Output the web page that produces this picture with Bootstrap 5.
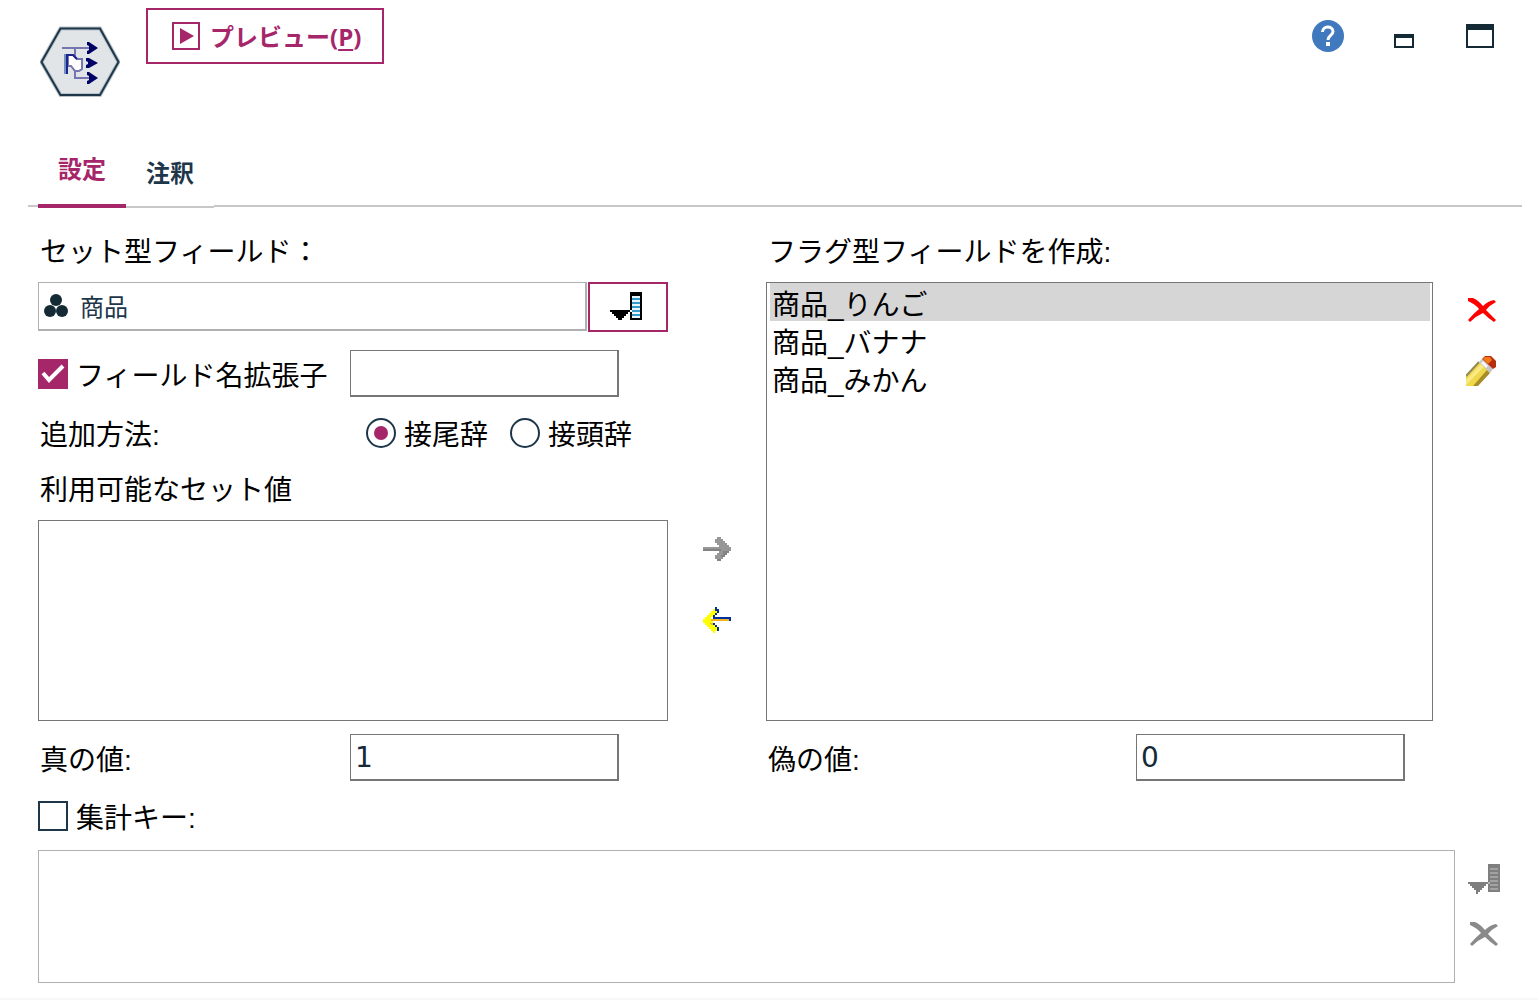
<!DOCTYPE html>
<html lang="ja">
<head>
<meta charset="utf-8">
<meta name="viewport" content="width=device-width, initial-scale=1">
<title>フラグ設定</title>
<link href="https://cdn.jsdelivr.net/npm/bootstrap@5.3.0/dist/css/bootstrap.min.css" rel="stylesheet">
<style>
  :root { --accent: #a6266a; --ink: #1d3649; --line: #767676; --line-soft: #b0b0b0; }
  body { font-family: "Liberation Sans", "Noto Sans CJK JP", sans-serif; font-size: 28px; line-height: 38px; color: #000; background: #fff; }
  svg { display: block; }
  label { padding-top: 6px; }
  .icon-btn { border: 0; background: none; padding: 0; }
  .top-bar { padding: 8px 44px 0 40px; height: 150px; }
  .node-icon { margin-top: 17px; }
  .btn-preview { font-family: "Open Sans", "Noto Sans CJK JP", sans-serif; font-size: 24px; line-height: 36px; font-weight: 700; color: var(--accent); background: #fff; border: 2px solid var(--accent); border-radius: 0; height: 56px; padding: 2px 21px 0 24px; gap: 10px; margin-left: 26px; }
  .btn-preview svg { margin-bottom: 2px; }
  .btn-preview u { text-underline-offset: 3px; text-decoration-thickness: 2px; }
  .window-tools { gap: 50px; height: 56px; }
  .tool-min { margin-top: 10px; margin-right: 2px; }
  .tab-strip { margin: 0 16px 0 28px; padding-left: 10px; border-bottom: 2px solid #c8c8c8; height: 57px; }
  .tab-strip .tab-btn { width: 88px; height: 58px; padding: 0; border: 0; border-bottom: 2px solid #c8c8c8; background: #fff; font-family: "Noto Sans CJK JP", sans-serif; font-size: 24px; font-weight: 700; line-height: 44px; padding-bottom: 12px; color: var(--ink); }
  .tab-strip .tab-btn.active { border-bottom: 4px solid var(--accent); color: var(--accent); line-height: 36px; padding-bottom: 18px; }
  .settings { padding: 25px 38px 15px; border-bottom: 2px solid #f8f8f8; }
  .pane-grid { display: grid; grid-template-columns: 630fr 98px 667fr 67px; }
  .caption { padding: 2px 0 0 2px; margin-bottom: 10px; display: block; }
  .indent { padding-left: 2px; }
  .field-box { border: 1px solid var(--line-soft); border-right-width: 2px; border-bottom-width: 2px; height: 49px; padding-left: 4px; gap: 11px; margin-right: 1px; }
  .field-box input { border: 0; outline: 0; padding: 0; min-width: 0; font-family: "Noto Sans CJK JP", sans-serif; font-size: 24px; line-height: 36px; color: var(--ink); background: none; }
  .btn-pick { width: 80px; height: 50px; border: 2px solid var(--accent); border-radius: 0; background: #fff; padding: 0 0 0 20px; }
  .value-box { width: 269px; height: 47px; border: 1px solid var(--line); border-right-width: 2px; border-bottom-width: 2px; border-radius: 0; padding: 0 4px; font-family: "DejaVu Sans", "Noto Sans CJK JP", sans-serif; font-size: 28px; line-height: 38px; color: #142a38; background: #fff; }
  .lead-cell { width: 312px; }
  .lead-cell-wide { width: 370px; }
  .lead-radio { width: 328px; }
  .row-ext { margin-top: 18px; }
  .row-how { margin-top: 14px; margin-bottom: 15px; }
  .row-vals { margin-top: 13px; }
  .row-keys { margin: 13px 0 12px; }
  .how-gap { gap: 22px; }
  .form-check-input.tick, .form-check-input.dot { width: 30px; height: 30px; margin: 0; float: none; border: 2px solid var(--ink); background-color: #fff; flex: none; }
  .form-check-input.tick { border-radius: 0; }
  .form-check-input.tick:checked { background-color: var(--accent); border-color: var(--accent); background-size: 26px 26px; background-image: url("data:image/svg+xml,%3csvg xmlns='http://www.w3.org/2000/svg' viewBox='0 0 26 26'%3e%3cpath fill='none' stroke='%23fff' stroke-width='4' d='M3 12l6 7L23 5'/%3e%3c/svg%3e"); }
  .form-check-input.dot:checked { background-color: #fff; border-color: var(--ink); background-size: 26px 26px; background-image: url("data:image/svg+xml,%3csvg xmlns='http://www.w3.org/2000/svg' viewBox='0 0 26 26'%3e%3ccircle cx='13' cy='13' r='7' fill='%23a6266a'/%3e%3c/svg%3e"); }
  .gap-tick { gap: 8px; }
  .list-area { display: block; width: 100%; border: 1px solid var(--line); border-radius: 0; background: #fff; padding: 0 2px 0 3px; outline: 0; font-family: "Liberation Sans", "Noto Sans CJK JP", sans-serif; font-size: 28px; color: #000; overflow: auto; }
  .list-area option { padding: 0 2px; height: 38px; min-height: 38px; line-height: 36px; color: #000; }
  .list-area option:checked { color: #000; background: #d6d6d6 linear-gradient(#d6d6d6, #d6d6d6); }
  .list-values { height: 201px; }
  .list-keys { height: 133px; border-color: var(--line-soft); }
  .move-tools { padding-top: 303px; gap: 42px; }
  .side-tools { padding: 66px 4px 0 0; gap: 34px; }
  .key-tools { width: 45px; padding: 14px 0 0; gap: 28px; }
</style>
</head>
<body>
<header class="top-bar d-flex align-items-start">
  <svg class="node-icon" width="80" height="74" viewBox="0 0 80 74" aria-hidden="true">
    <path d="M20.500 3.500H60L78.500 37 60 70H20.500L1.500 37Z" fill="#e1e5e8" stroke="#b9c2c8" stroke-width="4"/>
    <path d="M20.500 3.500H60L78.500 37 60 70H20.500L1.500 37Z" fill="none" stroke="#1d3649" stroke-width="2"/>
    <path d="M22 23H50M35 23V31M35 45V53H50" fill="none" stroke="#7676b0" stroke-width="2"/>
    <path d="M28 30H33L37 34H42V44L39 46H35L31 41H28Z" fill="#fff" stroke="#7676b0" stroke-width="2"/>
    <path d="M27 49V30H33L37 34" fill="none" stroke="#22228c" stroke-width="2"/>
    <path d="M25 29V49" stroke="#6d94c0" stroke-width="2"/>
    <path d="M47 17h2l9 6-9 6h-2v-3l2-1v-4l-2-1zM46 33h3l9 5-9 5h-3v-3l2-1v-2l-2-1zM47 47h2l9 6-9 6h-2v-3l2-1v-4l-2-1z" fill="#000066"/>
  </svg>
  <button type="button" class="btn-preview d-flex align-items-center">
    <svg width="28" height="28" viewBox="0 0 28 28" aria-hidden="true"><path d="M1 1H27V27H1Z" fill="none" stroke="#a6266a" stroke-width="2"/><path d="M8 6L22 14 8 22Z" fill="#a6266a"/></svg>
    <span>プレビュー(<u>P</u>)</span>
  </button>
  <div class="window-tools d-flex align-items-center ms-auto">
    <button type="button" class="icon-btn" aria-label="ヘルプ">
      <svg width="32" height="32" viewBox="0 0 32 32"><circle cx="16" cy="16" r="16" fill="#4179bf"/><path d="M10.500 12C10.500 5.500 21 5.500 21 11.500C21 15.500 16 15.500 16 20" fill="none" stroke="#fff" stroke-width="3"/><path d="M14 22h4v4h-4z" fill="#fff"/></svg>
    </button>
    <button type="button" class="icon-btn tool-min" aria-label="最小化">
      <svg width="20" height="14" viewBox="0 0 20 14"><path d="M0 0H20V14H0ZM2 4V12H18V4Z" fill="#142a35" fill-rule="evenodd"/></svg>
    </button>
    <button type="button" class="icon-btn" aria-label="最大化">
      <svg width="28" height="24" viewBox="0 0 28 24"><path d="M0 0H28V24H0ZM2 6V22H26V6Z" fill="#142a35" fill-rule="evenodd"/></svg>
    </button>
  </div>
</header>

<nav class="tab-strip d-flex" role="tablist">
  <button type="button" class="tab-btn active" role="tab" aria-selected="true">設定</button>
  <button type="button" class="tab-btn" role="tab" aria-selected="false">注釈</button>
</nav>

<main class="settings">
  <div class="pane-grid">
    <section>
      <label class="caption" for="setField">セット型フィールド：</label>
      <div class="d-flex">
        <div class="field-box d-flex align-items-center flex-grow-1">
          <svg width="26" height="26" viewBox="0 0 26 26" aria-hidden="true"><g fill="#142a35"><circle cx="13" cy="7" r="6"/><circle cx="7" cy="18" r="6"/><circle cx="19" cy="18" r="6"/></g></svg>
          <input id="setField" class="flex-grow-1" type="text" value="商品">
        </div>
        <button type="button" class="btn-pick" aria-label="フィールドを選択">
          <svg width="32" height="30" viewBox="0 0 32 30" shape-rendering="crispEdges"><path d="M0 18H20V20H18V22H16V24H14V26H12V28H8V26H6V24H4V22H2V20H0ZM20 0H32V28H20Z" fill="#000"/><path d="M22 4H30V26H22Z" fill="#e8f5fb"/><path d="M22 7H30M22 11H30M22 15H30M22 19H30M22 23H30" stroke="#3399cc" stroke-width="2"/><path d="M20 18H22V20H20Z" fill="#fff"/></svg>
        </button>
      </div>
      <div class="row-ext d-flex align-items-center">
        <div class="lead-cell d-flex align-items-center gap-tick">
          <input id="useExt" class="form-check-input tick" type="checkbox" checked>
          <label for="useExt">フィールド名拡張子</label>
        </div>
        <input class="value-box" type="text" aria-label="フィールド名拡張子">
      </div>
      <div class="row-how d-flex align-items-center" role="radiogroup" aria-labelledby="addHow">
        <label id="addHow" class="lead-radio indent" for="suffix">追加方法:</label>
        <div class="d-flex how-gap">
          <div class="d-flex align-items-center gap-tick">
            <input id="suffix" name="how" class="form-check-input dot" type="radio" aria-label="接尾辞" checked>
            <label for="suffix">接尾辞</label>
          </div>
          <div class="d-flex align-items-center gap-tick">
            <input id="prefix" name="how" class="form-check-input dot" type="radio">
            <label for="prefix">接頭辞</label>
          </div>
        </div>
      </div>
      <label class="caption" for="values">利用可能なセット値</label>
      <select id="values" class="list-area list-values" multiple></select>
    </section>

    <div class="move-tools d-flex flex-column align-items-center">
      <button type="button" class="icon-btn" aria-label="追加">
        <svg width="28" height="28" viewBox="0 0 28 28" shape-rendering="crispEdges"><path d="M0 12H16V10H14V8H12V4H14V2H18V4H20V6H22V8H24V10H26V12H28V16H26V18H24V20H22V22H20V24H18V26H14V24H12V20H14V18H16V16H0Z" fill="#979797"/><path d="M0 14H18V16H0ZM20 16H26V18H24V20H22V22H18V20H20ZM14 24H18V26H14Z" fill="#838383"/></svg>
      </button>
      <button type="button" class="icon-btn" aria-label="戻す">
        <svg width="28" height="28" viewBox="0 0 28 28" shape-rendering="crispEdges"><path d="M12 2H14V4H16V8H14V10H12V12H28V16H26V14H10V10H12ZM10 18H12V20H14V22H16V26H14V24H12V22H10Z" fill="#00309c"/><path d="M10 4H12V6H14V8H12V10H10V12H8V14H26V16H10V20H12V22H14V26H12V28H10V26H8V24H6V22H4V20H2V18H0V14H2V12H4V10H6V8H8V6H10Z" fill="#ffff00"/><path d="M8 14H26V16H8ZM6 18H10V20H8Z" fill="#f0b41e"/></svg>
      </button>
    </div>

    <section class="d-flex flex-column">
      <label class="caption" for="flags">フラグ型フィールドを作成:</label>
      <select id="flags" class="list-area flex-grow-1" multiple>
        <option selected>商品_りんご</option>
        <option>商品_バナナ</option>
        <option>商品_みかん</option>
      </select>
    </section>

    <div class="side-tools d-flex flex-column align-items-end">
      <button type="button" class="icon-btn" aria-label="削除">
        <svg width="28" height="24" viewBox="0 0 28 24"><path d="M0 0H5Q10 2 15 8Q20 3 26 2L28 4Q22 7 18 12Q22 16 28 22L26 24Q20 20 15 15Q8 18 2 24L0 22Q5 16 11 11Q7 6 0 3Z" fill="#fe0000"/></svg>
      </button>
      <button type="button" class="icon-btn" aria-label="編集">
        <svg width="30" height="30" viewBox="0 0 30 30"><path d="M0 20L13 6 24 16 10 30H0Z" fill="#f0d84c"/><path d="M0 24L15 8 18 11 0 29Z" fill="#fae882"/><path d="M7 30L21 14 24 17 12 30Z" fill="#a78d28"/><path d="M0 20L13 6" stroke="#918657" stroke-width="2"/><path d="M13 6L16 3 27 13 24 17Z" fill="#c6c6c6"/><path d="M15 7L17 5 22 10 20 12Z" fill="#f7f7f7"/><path d="M16 3L19 0H25L30 5V11L27 13Z" fill="#b72d10"/><path d="M17 3L19 1H24L26 4 22 8Z" fill="#f57a18"/></svg>
      </button>
    </div>
  </div>

  <div class="row-vals pane-grid">
    <div class="d-flex align-items-center">
      <label class="lead-cell indent" for="trueVal">真の値:</label>
      <input id="trueVal" class="value-box" type="text" value="1">
    </div>
    <div></div>
    <div class="d-flex align-items-center">
      <label class="lead-cell-wide indent" for="falseVal">偽の値:</label>
      <input id="falseVal" class="value-box" type="text" value="0">
    </div>
  </div>

  <div class="row-keys d-flex align-items-center gap-tick">
    <input id="useKeys" class="form-check-input tick" type="checkbox">
    <label for="useKeys">集計キー:</label>
  </div>
  <div class="d-flex">
    <select class="list-area list-keys flex-grow-1" multiple aria-label="集計キー"></select>
    <div class="key-tools d-flex flex-column align-items-end flex-shrink-0">
      <button type="button" class="icon-btn" aria-label="キーを選択">
        <svg width="32" height="30" viewBox="0 0 32 30" shape-rendering="crispEdges"><path d="M0 18H20V20H18V22H16V24H14V26H12V28H10V30H8V28H8V26H6V24H4V22H2V20H0ZM20 0H32V28H20Z" fill="#7f7f7f"/><path d="M22 5H30M22 9H30M22 13H30M22 17H30M22 21H30M22 25H30" stroke="#a2a2a2" stroke-width="2"/><path d="M20 18H22V20H20Z" fill="#b4b4b4"/></svg>
      </button>
      <button type="button" class="icon-btn" aria-label="キーを削除">
        <svg width="30" height="24" viewBox="0 0 30 24"><path d="M0 0H5Q10 2 15 8Q20 3 26 2L28 4Q22 7 18 12Q22 16 28 22L26 24Q20 20 15 15Q8 18 2 24L0 22Q5 16 11 11Q7 6 0 3Z" fill="#8a8a8a"/></svg>
      </button>
    </div>
  </div>
</main>
<script src="https://cdn.jsdelivr.net/npm/bootstrap@5.3.0/dist/js/bootstrap.bundle.min.js"></script>
</body>
</html>
